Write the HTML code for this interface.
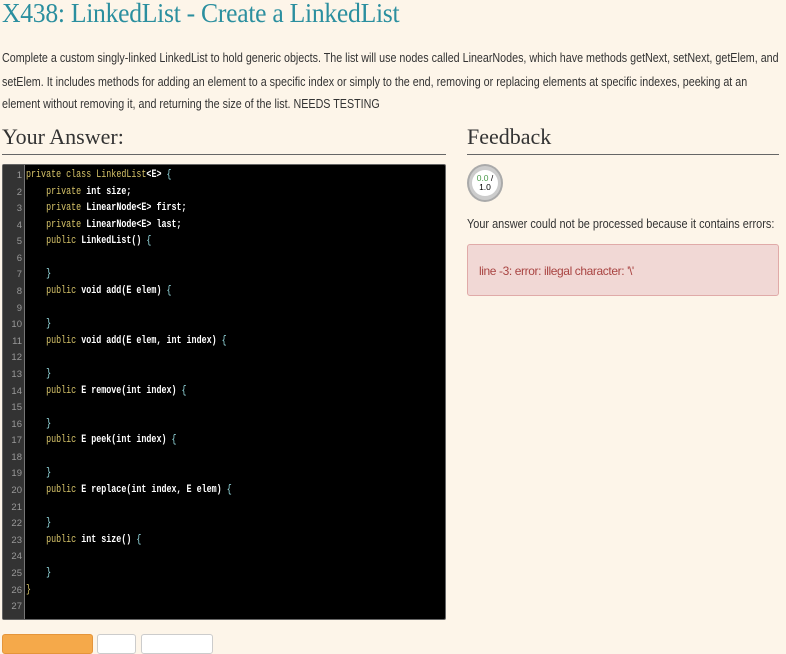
<!DOCTYPE html>
<html><head><meta charset="utf-8"><style>
body{margin:0;width:786px;height:640px;overflow:hidden;background:#fdf5e9;font-family:"Liberation Sans",sans-serif;position:relative}
.t{position:absolute;left:2px;top:-2px;font-family:"Liberation Serif",serif;font-size:27px;color:#2b8f9f;letter-spacing:-0.3px;transform:scaleX(0.95);transform-origin:left;white-space:nowrap}
.dl{position:absolute;left:2px;font-size:13px;color:#333;white-space:nowrap;transform:scaleX(0.825);transform-origin:left}
.h{position:absolute;top:124px;font-family:"Liberation Serif",serif;font-size:22px;color:#333}
.hr{position:absolute;top:154px;height:1px;background:#666}
.code{position:absolute;left:2px;top:164px;width:444px;height:456px;background:#000;border:1px solid #666;border-radius:2px;box-sizing:border-box}
.g{position:absolute;left:0;top:0;width:21px;height:100%;background:#333;border-right:1px solid #777}
.ln{position:absolute;left:0;width:19px;text-align:right;color:#999;font-size:9.5px}
.cl{position:absolute;left:23px;color:#fff;font-size:11px;font-family:"Liberation Mono",monospace;font-weight:bold;white-space:pre;transform:scaleX(0.76);transform-origin:left}
.k{color:#d8c56a;font-weight:normal}
.b{color:#9be3e8;font-weight:normal}
.circ{position:absolute;left:467px;top:164px;width:36px;height:38px;border-radius:50%;background:#ccc;border:2px solid #aaa;box-sizing:border-box}
.circ div{position:absolute;left:3px;top:4px;width:26px;height:26px;border-radius:50%;background:#fff;font-size:8.5px;line-height:9px;text-align:center;padding-top:4px;box-sizing:border-box}
.fb{position:absolute;left:467px;top:216px;font-size:13px;color:#333;white-space:nowrap;transform:scaleX(0.84);transform-origin:left}
.err{position:absolute;left:467px;top:244px;width:312px;height:52px;background:#f1d8d5;border:1px solid #e0aaa8;border-radius:3px;box-sizing:border-box;color:#a94442;font-size:12px;padding:19px 0 0 11px;letter-spacing:-0.4px}
.btn{position:absolute;top:634px;height:20px;border-radius:3px;box-sizing:border-box}
</style></head><body>
<div class="t">X438: LinkedList - Create a LinkedList</div>
<div class="dl" style="top:50px">Complete a custom singly-linked LinkedList to hold generic objects. The list will use nodes called LinearNodes, which have methods getNext, setNext, getElem, and</div>
<div class="dl" style="top:74px">setElem. It includes methods for adding an element to a specific index or simply to the end, removing or replacing elements at specific indexes, peeking at an</div>
<div class="dl" style="top:96px">element without removing it, and returning the size of the list. NEEDS TESTING</div>
<div class="h" style="left:2px">Your Answer:</div>
<div class="hr" style="left:2px;width:444px"></div>
<div class="h" style="left:467px">Feedback</div>
<div class="hr" style="left:467px;width:312px"></div>
<div class="code"><div class="g"></div>
<div id="c"></div>
</div>
<div class="circ"><div><span style="color:#4a9a4a">0.0</span> /<br>1.0</div></div>
<div class="fb">Your answer could not be processed because it contains errors:</div>
<div class="err">line -3: error: illegal character: '\'</div>
<div class="btn" style="left:2px;width:91px;background:#f5a94a;border:1px solid #e5953a"></div>
<div class="btn" style="left:97px;width:39px;background:#fff;border:1px solid #ccc"></div>
<div class="btn" style="left:141px;width:72px;background:#fff;border:1px solid #ccc"></div>
<script>
var L=['<span class="k">private class</span> <span class="k">LinkedList</span>&lt;E&gt; <span class="b">{</span>',
'    <span class="k">private</span> int size;',
'    <span class="k">private</span> LinearNode&lt;E&gt; first;',
'    <span class="k">private</span> LinearNode&lt;E&gt; last;',
'    <span class="k">public</span> LinkedList() <span class="b">{</span>','',
'    <span class="b">}</span>','    <span class="k">public</span> void add(E elem) <span class="b">{</span>','',
'    <span class="b">}</span>','    <span class="k">public</span> void add(E elem, int index) <span class="b">{</span>','',
'    <span class="b">}</span>','    <span class="k">public</span> E remove(int index) <span class="b">{</span>','',
'    <span class="b">}</span>','    <span class="k">public</span> E peek(int index) <span class="b">{</span>','',
'    <span class="b">}</span>','    <span class="k">public</span> E replace(int index, E elem) <span class="b">{</span>','',
'    <span class="b">}</span>','    <span class="k">public</span> int size() <span class="b">{</span>','',
'    <span class="b">}</span>','<span class="k">}</span>',''];
var h='';for(var i=0;i<27;i++){var y=5+i*16.58;h+='<div class="ln" style="top:'+y+'px">'+(i+1)+'</div><div class="cl" style="top:'+(y-1)+'px">'+L[i]+'</div>';}
document.getElementById('c').innerHTML=h;
</script>
</body></html>
